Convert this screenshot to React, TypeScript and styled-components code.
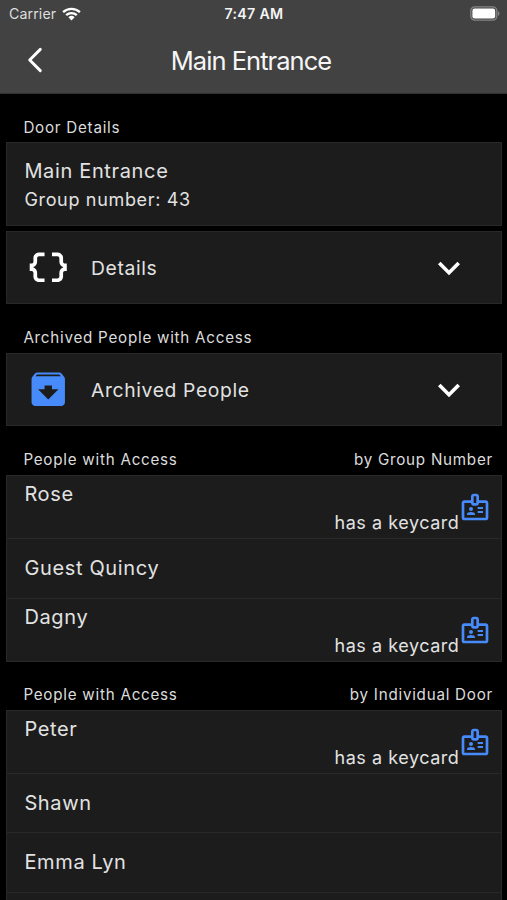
import React from "react";
import styled, { createGlobalStyle } from "styled-components";
import { MdArchive, MdDataObject, MdExpandMore, MdOutlineBadge } from "react-icons/md";

const GlobalStyle = createGlobalStyle`
  *, *::before, *::after { box-sizing: border-box; }
  body {
    margin: 0;
    background: #000;
    color: #e2e2e2;
    font-family: Inter, "Liberation Sans", sans-serif;
  }
`;

const Screen = styled.div`
  height: 900px;
  overflow: hidden;
  background: #000;
`;

const TopBar = styled.header`
  height: 94px;
  background: #424242;
  border-bottom: 1px solid #303030;
`;

const StatusBar = styled.div`
  display: grid;
  grid-template-columns: 1fr auto 1fr;
  align-items: center;
  height: 27px;
  padding: 0 7px 0 9px;
`;

const Carrier = styled.div`
  display: flex;
  align-items: center;
  gap: 6px;
  color: #dedede;
  font-size: 14.2px;
  letter-spacing: 0.1px;
`;

const Clock = styled.div`
  margin-left: -1px;
  color: #f4f4f4;
  font-size: 14.2px;
  font-weight: 600;
  letter-spacing: 0.3px;
`;

const BatteryIcon = styled.svg`
  justify-self: end;
  margin-top: -1px;
`;

const NavBar = styled.div`
  display: grid;
  grid-template-columns: 70px 1fr 70px;
  align-items: center;
  height: 65px;
`;

const BackButton = styled.button`
  display: flex;
  align-items: center;
  justify-content: center;
  width: 70px;
  height: 65px;
  padding: 0;
  border: 0;
  background: none;
`;

const Title = styled.h1`
  margin: 0;
  padding: 1px 5px 0 0;
  color: #f6f6f6;
  font-size: 25.5px;
  font-weight: 400;
  letter-spacing: -0.96px;
  line-height: 63px;
  text-align: center;
`;

const SectionHeader = styled.div<{ $height: number; $bottom?: number }>`
  display: flex;
  align-items: flex-end;
  justify-content: space-between;
  height: ${(p) => p.$height}px;
  padding: 0 14px ${(p) => p.$bottom ?? 4.5}px 23.4px;
  color: #dcdcdc;
  font-size: 15.2px;
  letter-spacing: 0.75px;
  line-height: 20px;
`;

const Card = styled.section<{ $gap?: number }>`
  margin: 0 5px 0 6px;
  margin-bottom: ${(p) => p.$gap ?? 0}px;
  border: 1px solid #29292a;
  background: #1c1c1d;
`;

const Summary = styled.div`
  height: 82px;
  padding: 15px 17px 0 17.4px;
`;

const Name = styled.div`
  font-size: 20px;
  letter-spacing: 0.65px;
  line-height: 26px;
`;

const Note = styled.div`
  font-size: 18px;
  letter-spacing: 0.67px;
  line-height: 24px;
`;

const GroupNote = styled(Note)`
  margin-top: 4px;
`;

const Expander = styled.button<{ $height: number }>`
  display: grid;
  grid-template-columns: 82px 1fr 44px;
  align-items: center;
  width: 100%;
  height: ${(p) => p.$height}px;
  padding: 0 30px 0 0;
  border: 0;
  background: none;
  color: #e2e2e2;
  font-family: inherit;
  font-size: 19.3px;
  letter-spacing: 0.65px;
  text-align: left;
`;

const ExpanderLabel = styled.span`
  padding-left: 2px;
`;

const LeadIcon = styled.span<{ $color: string }>`
  display: flex;
  justify-content: center;
  color: ${(p) => p.$color};
`;

const Arrow = styled.span`
  display: flex;
  color: #fff;
`;

const PersonRow = styled.div<{ $keycard: boolean }>`
  display: flex;
  flex-direction: column;
  justify-content: ${(p) => (p.$keycard ? "flex-start" : "center")};
  height: ${(p) => (p.$keycard ? 63 : 59.5)}px;
  padding: ${(p) => (p.$keycard ? 5 : 0)}px 10px 0 17.4px;
  border-bottom: 1px solid #29292a;
  &:last-child {
    height: 62px;
    border-bottom: 0;
  }
`;

const KeycardLine = styled.div`
  display: flex;
  align-items: flex-end;
  justify-content: flex-end;
  height: 28px;
`;

const KeycardText = styled(Note)`
  margin-right: -0.4px;
  letter-spacing: 0.53px;
`;

const BadgeSlot = styled.span`
  display: flex;
  margin-bottom: 12px;
  color: #478bfb;
`;

const WifiIcon = () => (
  <svg width="19" height="14" viewBox="0 0 19 14">
    <g fill="none" stroke="#fff" strokeWidth="2.3">
      <path d="M1.1 5.2C5.8.7 13.2.7 17.9 5.2" />
      <path d="M4.2 8.2C7.1 5.4 11.9 5.4 14.8 8.2" />
    </g>
    <path fill="#fff" d="M6.4 10.3a4.5 4.5 0 0 1 6.2 0L9.5 13.6z" />
  </svg>
);

const Battery = () => (
  <BatteryIcon width="30" height="15" viewBox="0 0 30 15">
    <rect x="0.8" y="0.9" width="26" height="13.2" rx="4" fill="none" stroke="#858585" strokeWidth="1.3" />
    <rect x="2.4" y="2.6" width="22.8" height="9.8" rx="2.2" fill="#fff" />
    <path d="M28 5.2c1.9.7 1.9 3.9 0 4.6z" fill="#858585" />
  </BatteryIcon>
);

type Person = { name: string; keycard?: boolean };

const byGroup: Person[] = [
  { name: "Rose", keycard: true },
  { name: "Guest Quincy" },
  { name: "Dagny", keycard: true },
];

const byDoor: Person[] = [
  { name: "Peter", keycard: true },
  { name: "Shawn" },
  { name: "Emma Lyn" },
  { name: "" },
];

const People = ({ people }: { people: Person[] }) => (
  <Card>
    {people.map((p, i) => (
      <PersonRow key={i} $keycard={!!p.keycard}>
        <Name>{p.name}</Name>
        {p.keycard && (
          <KeycardLine>
            <KeycardText>has a keycard</KeycardText>
            <BadgeSlot>
              <MdOutlineBadge size={32} />
            </BadgeSlot>
          </KeycardLine>
        )}
      </PersonRow>
    ))}
  </Card>
);

export default function App() {
  return (
    <Screen>
      <GlobalStyle />
      <TopBar>
        <StatusBar>
          <Carrier>
            Carrier
            <WifiIcon />
          </Carrier>
          <Clock>7:47 AM</Clock>
          <Battery />
        </StatusBar>
        <NavBar>
          <BackButton aria-label="Back">
            <svg width="16" height="26" viewBox="0 0 16 26">
              <path d="M13.3 2.4 2.7 13l10.6 10.6" fill="none" stroke="#fff" strokeWidth="2.9" strokeLinecap="round" strokeLinejoin="round" />
            </svg>
          </BackButton>
          <Title>Main Entrance</Title>
        </NavBar>
      </TopBar>

      <SectionHeader $height={48}>Door Details</SectionHeader>
      <Card $gap={5}>
        <Summary>
          <Name>Main Entrance</Name>
          <GroupNote>Group number: 43</GroupNote>
        </Summary>
      </Card>
      <Card>
        <Expander $height={71}>
          <LeadIcon $color="#fff">
            <MdDataObject size={44.5} />
          </LeadIcon>
          <ExpanderLabel>Details</ExpanderLabel>
          <Arrow>
            <MdExpandMore size={44} />
          </Arrow>
        </Expander>
      </Card>

      <SectionHeader $height={49} $bottom={5}>Archived People with Access</SectionHeader>
      <Card>
        <Expander $height={71}>
          <LeadIcon $color="#478bfb">
            <MdArchive size={44.5} />
          </LeadIcon>
          <ExpanderLabel>Archived People</ExpanderLabel>
          <Arrow>
            <MdExpandMore size={44} />
          </Arrow>
        </Expander>
      </Card>

      <SectionHeader $height={49} $bottom={5}>
        <span>People with Access</span>
        <span>by Group Number</span>
      </SectionHeader>
      <People people={byGroup} />

      <SectionHeader $height={48.2}>
        <span>People with Access</span>
        <span>by Individual Door</span>
      </SectionHeader>
      <People people={byDoor} />
    </Screen>
  );
}
